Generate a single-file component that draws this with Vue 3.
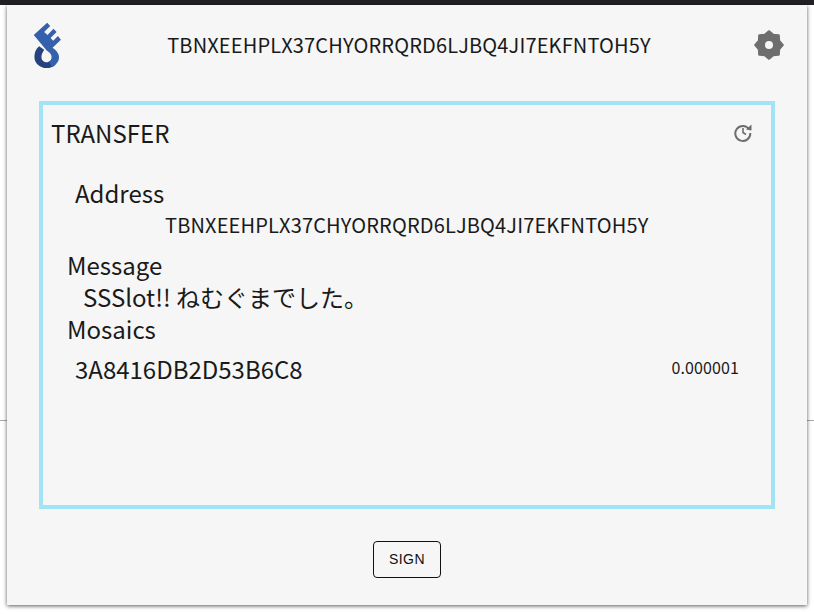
<script setup>
const address = 'TBNXEEHPLX37CHYORRQRD6LJBQ4JI7EKFNTOH5Y'
const gearPoints = Array.from({ length: 16 }, (_, i) => {
  const r = i % 2 === 0 ? 13.6 : 10.8
  const a = (i * Math.PI) / 8 - Math.PI / 2
  return `${(15 + r * Math.cos(a)).toFixed(2)},${(15 + r * Math.sin(a)).toFixed(2)}`
}).join(' ')
</script>

<template>
  <div class="page">
    <div class="topbar"></div>
    <div class="rule"></div>
    <main class="popup">
      <header class="head">
        <svg class="logo" viewBox="100 66 86 140" width="29" height="47">
          <path fill="#25427f" d="M118 138 C108 146 104 158 104 170 C104 190 122 203 140 203 C150 203 160 200 167 193 L150 182 C146 186 140 187 135 185 C127 183 124 175 125 168 C126 160 130 155 133 149 Z"/>
          <path fill="#3560ab" d="M102 105 L142 68 L151 78 L133 96 L143 105 L161 86 L170 96 L152 114 L160 122 L174 108 L183 119 L158 143 C172 152 181 165 176 180 C172 190 164 197 155 200 C152 192 150 188 146 184 C152 182 156 176 155 168 C154 160 148 156 140 150 Z"/>
        </svg>
        <div class="addr">{{ address }}</div>
        <svg class="gear" viewBox="0 0 30 30" width="30" height="30">
          <polygon :points="gearPoints" fill="#6e6e6e" stroke="#6e6e6e" stroke-width="2.4" stroke-linejoin="round"/>
          <circle cx="15" cy="15" r="4" fill="#f6f6f6"/>
        </svg>
      </header>
      <section class="card">
        <div class="card-head">
          <div class="title">TRANSFER</div>
          <svg class="hist" viewBox="0 0 20 20" width="20" height="20">
            <path fill="none" stroke="#6e6e6e" stroke-width="2" d="M16.2 7.5 A7.5 7.5 0 1 0 17.3 11"/>
            <path fill="#6e6e6e" d="M13 7.5 L18.5 2.5 L18.5 8.5 Z"/>
            <path fill="none" stroke="#6e6e6e" stroke-width="1.6" d="M10 6 V10.5 L13 12.5"/>
          </svg>
        </div>
        <div class="label indent">Address</div>
        <div class="address">{{ address }}</div>
        <div class="label message">Message</div>
        <div class="msg">SSSlot!! ねむぐまでした。</div>
        <div class="label">Mosaics</div>
        <div class="mosaic">
          <span class="mid">3A8416DB2D53B6C8</span>
          <span class="amount">0.000001</span>
        </div>
      </section>
      <div class="actions"><button class="sign">SIGN</button></div>
    </main>
  </div>
</template>

<style>
html, body { margin: 0; background: #fff; }
</style>

<style scoped>
.page {
  position: relative;
  width: 814px;
  height: 614px;
  overflow: hidden;
  box-sizing: border-box;
  padding: 5px 0 0 7px;
  font-family: "Noto Sans CJK JP", "Noto Sans", sans-serif;
  color: #1a1a1a;
}
.topbar { position: absolute; left: 0; top: 0; width: 100%; height: 5px; background: #202124; }
.rule { position: absolute; left: 0; top: 420px; width: 100%; height: 1px; background: #a8a8a8; }
.popup {
  position: relative;
  width: 800px;
  height: 600px;
  background: #f6f6f6;
  box-shadow: 0 1px 4px rgba(0,0,0,.65);
  box-sizing: border-box;
  padding: 0 32px;
}
.head { height: 96px; display: flex; align-items: center; justify-content: space-between; padding-bottom: 18px; box-sizing: border-box; }
.logo { margin-left: -6px; margin-top: 3px; }
.addr { font-size: 20px; letter-spacing: .15px; margin-left: 2px; }
.gear { margin-right: -9px; margin-top: 2px; }
.card {
  width: 736px;
  height: 408px;
  box-sizing: border-box;
  border: 4px solid #a2e3f6;
  padding: 0 8px;
}
.card-head { display: flex; align-items: center; justify-content: space-between; height: 54px; }
.title { font-size: 24px; }
.hist { margin-right: 10px; }
.label { font-size: 24px; line-height: 32px; padding-left: 16px; }
.label.indent { padding-left: 24px; margin-top: 18px; }
.address { font-size: 20px; letter-spacing: .15px; line-height: 32px; padding-left: 114px; }
.message { margin-top: 8px; }
.msg { font-size: 24px; line-height: 32px; padding-left: 32px; }
.mosaic { display: flex; justify-content: space-between; align-items: center; padding: 4px 24px 0 24px; }
.mid { font-size: 24px; line-height: 40px; }
.amount { font-size: 16px; letter-spacing: .1px; margin-bottom: 4px; }
.actions { display: flex; justify-content: center; padding-top: 32px; }
.sign {
  width: 68px; height: 37px; background: transparent;
  border: 1px solid #111; border-radius: 4px;
  font: 14px "Liberation Sans", sans-serif; letter-spacing: .4px; color: #111; padding: 0 0 2px;
}
</style>
